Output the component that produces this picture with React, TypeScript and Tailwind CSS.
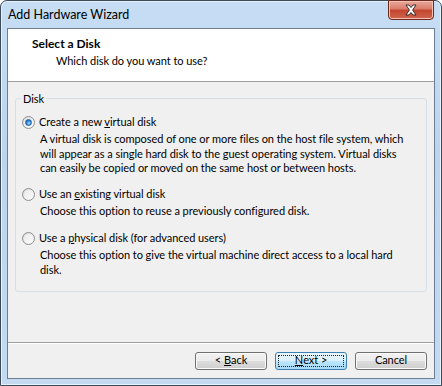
function Radio({ checked }: { checked?: boolean }) {
  return (
    <span className="relative flex h-[13px] w-[13px] shrink-0 items-center justify-center rounded-full border border-[#8f8f8f] bg-[linear-gradient(135deg,#d6d6d6,#ffffff)]">
      <span className="h-[9px] w-[9px] rounded-full bg-[linear-gradient(135deg,#e9e9e9,#fbfbfb)]">
        {checked && (
          <span className="m-[1px] block h-[7px] w-[7px] rounded-full border border-[#195fa4] bg-[radial-gradient(circle_at_60%_65%,#9fdcfb,#2b7fd0_55%,#14508d)]" />
        )}
      </span>
    </span>
  );
}

function Option({
  checked,
  label,
  lines,
  className,
}: {
  checked?: boolean;
  label: React.ReactNode;
  lines: string[];
  className?: string;
}) {
  return (
    <div className={className}>
      <div className="flex h-[15px] items-center gap-[4px]">
        <Radio checked={checked} />
        <span>{label}</span>
      </div>
      <div className="mt-[2px] pl-[18px] leading-[14.5px] whitespace-nowrap">
        {lines.map((l) => (
          <div key={l}>{l}</div>
        ))}
      </div>
    </div>
  );
}

function Button({
  children,
  primary,
}: {
  children: React.ReactNode;
  primary?: boolean;
}) {
  return (
    <div
      className={
        primary
          ? "flex h-[18px] w-[72px] items-center justify-center rounded-[3px] border border-[#3c7fb1] bg-[linear-gradient(#eaf6fd_0%,#d9f0fc_50%,#bee6fd_50%,#a7d9f5_100%)] p-[2px]"
          : "flex h-[18px] w-[72px] items-center justify-center rounded-[3px] border border-[#707070] bg-[linear-gradient(#f2f2f2_0%,#ebebeb_50%,#dddddd_50%,#cfcfcf_100%)] shadow-[inset_0_0_0_1px_#fcfcfc]"
      }
    >
      {primary ? (
        <div className="flex h-full w-full items-center justify-center border border-dotted border-[#222]">
          {children}
        </div>
      ) : (
        children
      )}
    </div>
  );
}

export default function App() {
  return (
    <div className="h-[386px] w-[442px] overflow-hidden bg-white font-['Lato',sans-serif] text-[11px] tracking-[-0.05px] text-black">
      <div className="relative flex h-[386px] w-[442px] flex-col rounded-t-[7px] border border-[#3b4b5c] bg-[linear-gradient(180deg,#c6ddf4_0%,#bcd4ee_40%,#c3daf1_100%)] shadow-[inset_0_0_0_1px_#e8f2fb]">
        {/* Title bar */}
        <div className="flex h-[27px] items-center pl-[7px] pt-[2px] text-[12.5px] tracking-normal">
          Add Hardware Wizard
        </div>

        {/* Close button */}
        <div className="absolute right-[7px] top-[-1px] flex h-[20px] w-[46px] items-center justify-center rounded-b-[4px] border border-[#6c2a1f] bg-[linear-gradient(#e9a99b_0%,#d97b68_45%,#c2452f_50%,#d2654c_100%)] shadow-[inset_0_0_0_1px_#f3c1b6]">
          <svg width="14" height="12" viewBox="0 0 14 12">
            <path
              d="M2 1 L5 1 L7 3.5 L9 1 L12 1 L8.6 6 L12 11 L9 11 L7 8.5 L5 11 L2 11 L5.4 6 Z"
              fill="#ffffff"
              stroke="#3b2a2a"
              strokeWidth="1"
              strokeLinejoin="round"
            />
          </svg>
        </div>

        {/* Client area */}
        <div className="mx-[6px] flex h-[351px] flex-col border border-[#6b7f93] bg-[#f0f0f0]">
          {/* Header */}
          <div className="h-[53px] border-b border-[#a0a0a0] bg-white">
            <div className="pl-[24px] pt-[7px] text-[12px] font-bold leading-[15px] tracking-normal">
              Select a Disk
            </div>
            <div className="pl-[48px] pt-[2px] leading-[15px]">
              Which disk do you want to use?
            </div>
          </div>

          {/* Group box */}
          <div className="relative mx-[7px] mt-[16px] h-[194px] rounded-[3px] border border-[#d5dfe5]">
            <div className="absolute left-[5px] top-[-8px] bg-[#f0f0f0] px-[2px] leading-[15px]">
              Disk
            </div>
            <div className="flex flex-col pl-[6px] pt-[16px]">
              <Option
                checked
                label={
                  <>
                    Create a new <span className="underline">v</span>irtual disk
                  </>
                }
                lines={[
                  "A virtual disk is composed of one or more files on the host file system, which",
                  "will appear as a single hard disk to the guest operating system. Virtual disks",
                  "can easily be copied or moved on the same host or between hosts.",
                ]}
              />
              <Option
                className="mt-[11px]"
                label={
                  <>
                    Use an <span className="underline">e</span>xisting virtual disk
                  </>
                }
                lines={["Choose this option to reuse a previously configured disk."]}
              />
              <Option
                className="mt-[13px]"
                label={
                  <>
                    Use a <span className="underline">p</span>hysical disk (for advanced users)
                  </>
                }
                lines={[
                  "Choose this option to give the virtual machine direct access to a local hard",
                  "disk.",
                ]}
              />
            </div>
          </div>

          {/* Footer */}
          <div className="mt-auto border-t border-[#a0a0a0] shadow-[inset_0_1px_0_#ffffff]">
            <div className="flex h-[35px] items-center justify-end gap-[8px] pr-[7px]">
              <Button>
                &lt; <span className="ml-[3px] underline">B</span>ack
              </Button>
              <Button primary>
                <span className="underline">N</span>ext &gt;
              </Button>
              <Button>Cancel</Button>
            </div>
          </div>
        </div>
      </div>
    </div>
  );
}
